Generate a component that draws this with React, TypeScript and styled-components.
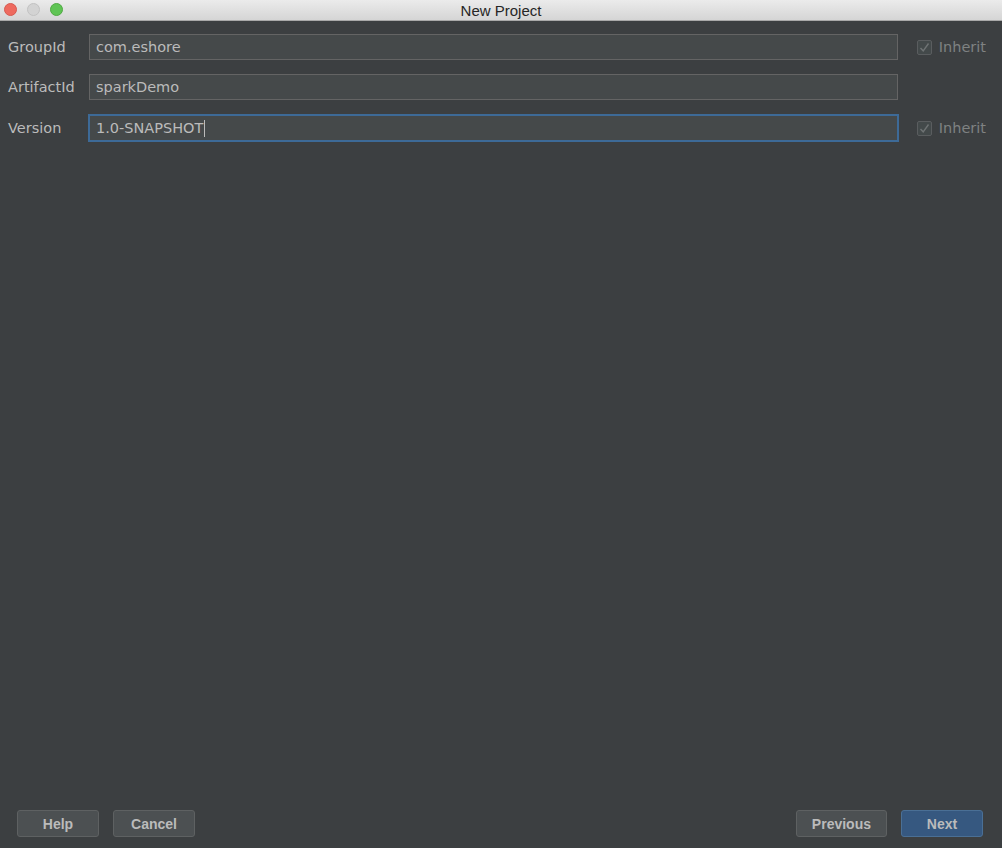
import styled, { createGlobalStyle } from 'styled-components';

const GlobalStyle = createGlobalStyle`
  html, body {
    margin: 0;
    padding: 0;
    background: #3c3f41;
  }
  * {
    box-sizing: border-box;
  }
`;

const Window = styled.div`
  display: flex;
  flex-direction: column;
  height: 100vh;
  background: #3c3f41;
  font-family: "DejaVu Sans", "Noto Sans", sans-serif;
`;

const TitleBar = styled.div`
  position: relative;
  height: 21px;
  flex: none;
  display: flex;
  align-items: center;
  justify-content: center;
  background: linear-gradient(#ebebeb, #d5d5d5);
  border-bottom: 1px solid #a9a9a9;
  font-family: "Liberation Sans", Arial, sans-serif;
  font-size: 15px;
  color: #262626;
`;

const Lights = styled.div`
  position: absolute;
  left: 4px;
  top: 3px;
  display: flex;
  gap: 10px;
`;

const Light = styled.span<{ $color: string; $edge: string }>`
  width: 13px;
  height: 13px;
  border-radius: 50%;
  background: ${(p) => p.$color};
  border: 1px solid ${(p) => p.$edge};
`;

const Form = styled.div`
  display: grid;
  grid-template-columns: 81px 1fr auto;
  row-gap: 14px;
  padding: 13px 16px 0 8px;
  align-items: center;
`;

const Label = styled.label`
  font-size: 14.5px;
  color: #bbbbbb;
`;

const Field = styled.div<{ $focused?: boolean }>`
  grid-column: 2;
  display: flex;
  align-items: center;
  padding-left: 6px;
  margin: ${(p) => (p.$focused ? '0 -1px' : '0')};
  height: ${(p) => (p.$focused ? '28px' : '26px')};
  background: #45494a;
  border: ${(p) => (p.$focused ? '2px solid #3d6a97' : '1px solid #646464')};
  font-size: 14.5px;
  color: #bbbbbb;
`;

const Caret = styled.span`
  display: inline-block;
  width: 1px;
  height: 17px;
  background: #bbbbbb;
  margin-left: 1px;
`;

const Inherit = styled.div`
  display: flex;
  align-items: center;
  gap: 7px;
  padding-left: 19px;
  font-size: 14.5px;
  color: #7f8282;
`;

const Box = styled.span`
  width: 15px;
  height: 15px;
  display: flex;
  align-items: center;
  justify-content: center;
  border: 1px solid #5a5d5f;
  border-radius: 2px;
  background: #43494a;
`;

const Spacer = styled.div`
  flex: 1;
`;

const Footer = styled.div`
  display: flex;
  align-items: center;
  padding: 0 19px 11px 17px;
  gap: 14px;
`;

const Button = styled.button<{ $primary?: boolean }>`
  min-width: 82px;
  height: 27px;
  padding: 0 15px;
  border-radius: 3px;
  border: 1px solid ${(p) => (p.$primary ? '#4a6f95' : '#5e6162')};
  background: ${(p) => (p.$primary ? '#365880' : '#4c5052')};
  color: #bbbbbb;
  font-family: "Liberation Sans", Arial, sans-serif;
  font-weight: bold;
  font-size: 14px;
`;

const Check = () => (
  <Box>
    <svg width="11" height="11" viewBox="0 0 11 11">
      <path d="M1.5 6 L4.2 8.8 L9.5 1.5" fill="none" stroke="#6f7374" strokeWidth="1.4" />
    </svg>
  </Box>
);

const App = () => {
  return (
    <Window>
      <GlobalStyle />
      <TitleBar>
        <Lights>
          <Light $color="#ee6a5f" $edge="#d65a50" />
          <Light $color="#d3d3d3" $edge="#c2c2c2" />
          <Light $color="#5fc454" $edge="#4fa943" />
        </Lights>
        New Project
      </TitleBar>
      <Form>
        <Label>GroupId</Label>
        <Field>com.eshore</Field>
        <Inherit>
          <Check />
          Inherit
        </Inherit>

        <Label>ArtifactId</Label>
        <Field>sparkDemo</Field>
        <span />

        <Label>Version</Label>
        <Field $focused>
          1.0-SNAPSHOT
          <Caret />
        </Field>
        <Inherit>
          <Check />
          Inherit
        </Inherit>
      </Form>
      <Spacer />
      <Footer>
        <Button>Help</Button>
        <Button>Cancel</Button>
        <Spacer />
        <Button>Previous</Button>
        <Button $primary>Next</Button>
      </Footer>
    </Window>
  );
};

export default App;
